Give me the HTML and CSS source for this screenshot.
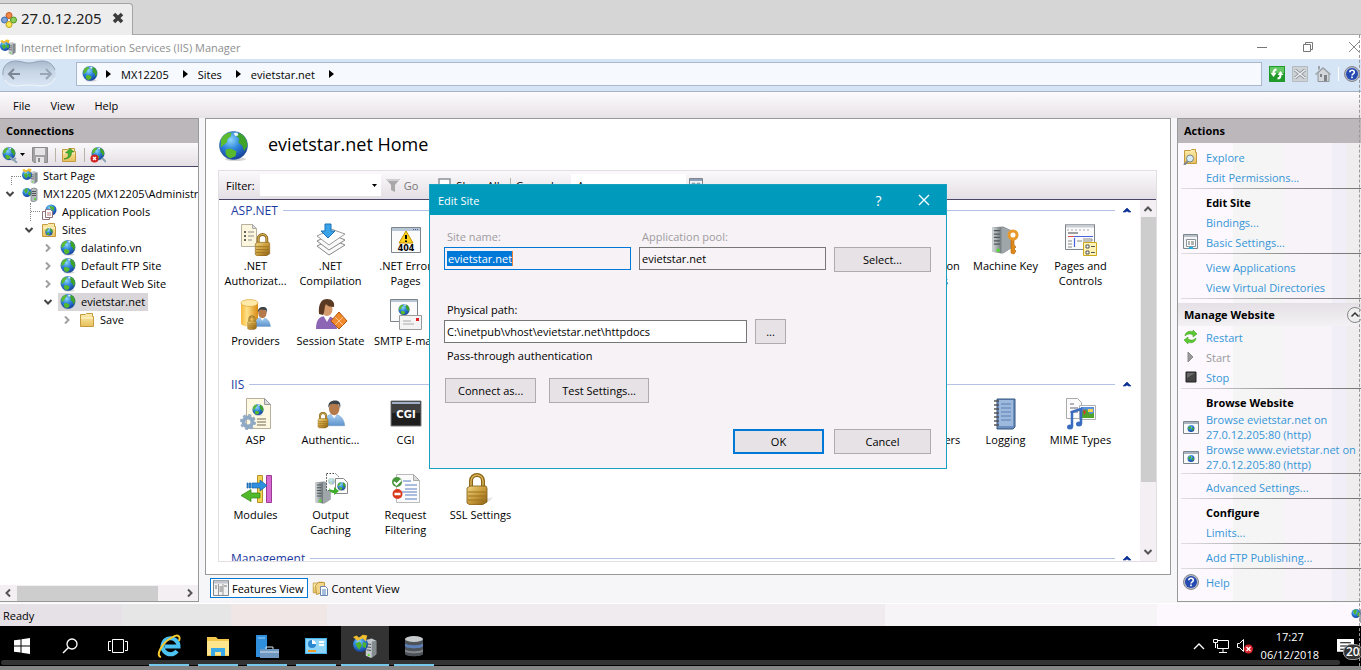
FILE: index.html
```html
<!DOCTYPE html>
<html lang="en">

<head>
    <meta charset="UTF-8">
    <meta name="viewport" content="width=device-width, initial-scale=1.0">
    <title>Internet Information Services (IIS) Manager</title>
    <link rel="stylesheet" href="styles.css">
</head>

<body>
    <!-- shared icon shapes -->
    <svg class="sprite" aria-hidden="true">
        <defs>
            <radialGradient id="sea" cx="0.4" cy="0.3" r="0.75">
                <stop offset="0" stop-color="#8fd6fb" />
                <stop offset="0.45" stop-color="#2f86dc" />
                <stop offset="1" stop-color="#123a96" />
            </radialGradient>
            <linearGradient id="gold" x1="0" x2="1" y1="0" y2="1">
                <stop offset="0" stop-color="#f0d784" />
                <stop offset="0.5" stop-color="#c99b3a" />
                <stop offset="1" stop-color="#8a5f12" />
            </linearGradient>
            <linearGradient id="steel" x1="0" x2="1">
                <stop offset="0" stop-color="#d8dcde" />
                <stop offset="1" stop-color="#6f777b" />
            </linearGradient>
            <linearGradient id="manila" x1="0" x2="0" y1="0" y2="1">
                <stop offset="0" stop-color="#fdeeb0" />
                <stop offset="1" stop-color="#e6c05c" />
            </linearGradient>
            <linearGradient id="drum" x1="0" x2="1">
                <stop offset="0" stop-color="#f6b73a" />
                <stop offset="0.35" stop-color="#ffe28a" />
                <stop offset="1" stop-color="#d98a12" />
            </linearGradient>
            <linearGradient id="sky" x1="0" x2="0" y1="0" y2="1">
                <stop offset="0" stop-color="#a9d0f3" />
                <stop offset="1" stop-color="#5d93cc" />
            </linearGradient>
            <linearGradient id="pill" x1="0" x2="0" y1="0" y2="1">
                <stop offset="0" stop-color="#a9b9cc" />
                <stop offset="0.4" stop-color="#c6d4e5" />
                <stop offset="1" stop-color="#d9e6f4" />
            </linearGradient>
        </defs>
        <symbol id="globe" viewBox="0 0 32 32">
            <ellipse cx="18" cy="29" rx="11" ry="2" fill="#d5d5d5" />
            <circle cx="16" cy="15" r="14.5" fill="url(#sea)" stroke="#2a5a9c" stroke-width="0.6" />
            <path d="M3 9C6 3 10 1 14 2l-1 4-3 2-1 4-4 3-2 2z" fill="#5cbb2e" />
            <path d="M22 2c5 2 9 8 8 14l-3 5-2-6-4-3 1-4-3-3z" fill="#3fa32a" />
            <path d="M8 19l5-1 6 3-1 5-5 2c-4-1-6-4-5-9z" fill="#58b92c" />
            <path d="M16 2l4-.5 1 3-3 1z" fill="#e8f6ff" />
        </symbol>
        <symbol id="tower" viewBox="0 0 32 32">
            <path d="M5 1l13-1 9 4v22l-9 6-13-2z" fill="#8a9296" />
            <path d="M5 1l11 0v31l-11-2z" fill="url(#steel)" />
            <path d="M16 1l11 3v22l-11 6z" fill="#9fa6a9" />
            <path d="M7 5h7M7 9h7M7 13h7M7 17h7M7 21h7" stroke="#4e565a" stroke-width="1.5" />
            <circle cx="12" cy="28" r="2" fill="#54dc2a" />
        </symbol>
        <symbol id="lock" viewBox="0 0 32 32">
            <path d="M10 16V8a6 6 0 0 1 12 0v8" fill="none" stroke="#8a6416" stroke-width="4" />
            <path d="M10 16V8a6 6 0 0 1 12 0v8" fill="none" stroke="#d9b45a" stroke-width="1.5" />
            <path d="M6 15l3-2h16l1 2v14l-5 3H9l-3-2z" fill="url(#gold)" stroke="#7e5812" stroke-width="0.8" />
            <path d="M7 19h18M7 23h18M7 27h18" stroke="#9a7222" stroke-width="1.2" />
        </symbol>
        <symbol id="folder" viewBox="0 0 16 16">
            <path d="M1.500 2.500h5l1-1h6v3h1v10h-13z" fill="url(#manila)" stroke="#c39a3c" />
            <path d="M2 6h12" stroke="#fff7d8" />
        </symbol>
        <symbol id="serverglobe" viewBox="0 0 16 16">
            <path d="M9 3l3-1 3 1v11l-3 2-3-1z" fill="#b5bcbf" stroke="#70787c" stroke-width="0.7" />
            <path d="M10 5.500h4M10 7.500h4M10 9.500h4" stroke="#555" />
            <circle cx="13" cy="13" r="1" fill="#4ad424" />
            <circle cx="5" cy="6.500" r="4.500" fill="url(#sea)" />
            <path d="M2 4l3-2 1 2-2 4zM7 5l2 1-1 4-2-2z" fill="#4fb32b" />
        </symbol>
        <symbol id="person" viewBox="0 0 32 32">
            <path d="M2 31c0-9 4-14 12-14s13 5 14 14z" fill="url(#sky)" stroke="#6b94bf" stroke-width="0.6" />
            <path d="M11 16l4 6 4-6z" fill="#fff" />
            <ellipse cx="15" cy="10" rx="6.500" ry="8" fill="#b47a4c" />
            <path d="M8 9c-1-6 3-9 8-9 5 0 8 3 6 10l-1-5-8-1-3 1z" fill="#3d4448" />
        </symbol>
        <symbol id="window" viewBox="0 0 32 32">
            <path d="M1.500 3.500h29v25h-29z" fill="#fbfbfb" stroke="#7d858c" />
            <path d="M2 4h28v3H2z" fill="#b9c6d6" />
            <path d="M23 5.500h6" stroke="#47628c" stroke-dasharray="1 1" />
        </symbol>
        <symbol id="sitewin" viewBox="0 0 16 16">
            <path d="M.500 2.500h15v12H.500z" fill="#fafafa" stroke="#7b858c" />
            <path d="M1 4h14" stroke="#a9b4c0" stroke-width="2" />
            <circle cx="8" cy="9.500" r="3.500" fill="url(#sea)" />
            <path d="M5 8l3-1v2l-2 2zM9 8l2 2-2 2z" fill="#45aa2a" />
        </symbol>
        <symbol id="help" viewBox="0 0 16 16">
            <circle cx="8" cy="8" r="7.500" fill="#b9bcc4" stroke="#70747e" stroke-width="0.8" />
            <circle cx="8" cy="8" r="6" fill="#2449b0" />
            <path d="M5.800 6.300C5.800 3.500 10.300 3.500 10.300 6.200 10.300 7.800 8 7.800 8 9.500M8 10.600v1.700" fill="none" stroke="#fff" stroke-width="1.600" />
        </symbol>
        <symbol id="iis" viewBox="0 0 32 32">
            <path d="M17 8l8-2 6 3v18l-7 5-7-3z" fill="#c3c9cc" />
            <path d="M25 10l6-1v18l-6 5z" fill="#838b8f" />
            <path d="M18 13l6 1M18 17l6 1M18 21l6 1" stroke="#555" stroke-width="1.500" />
            <circle cx="21" cy="28" r="1.500" fill="#5ae02a" />
            <circle cx="10" cy="14" r="10" fill="url(#sea)" />
            <path d="M3 13l6-3 3 5-4 6zM13 11l5 1-1 7-4-2z" fill="#4fb32b" />
            <path d="M0 4l5-2 3 3 5-4 6 1-2 8-4-4-7 3z" fill="#f2bd2e" />
        </symbol>
        <symbol id="up" viewBox="0 0 8 6">
            <path d="M0 5l4-4 4 4H5.500L4 4 2.500 5z" fill="#0a2f96" stroke="#0a2f96" stroke-width="0.600" />
        </symbol>
        <symbol id="chev" viewBox="0 0 10 10">
            <path d="M1.500 3l3.500 3.500L8.500 3" fill="none" stroke="currentColor" stroke-width="2" />
        </symbol>
        <symbol id="tri" viewBox="0 0 5 8">
            <path d="M0 0l5 4-5 4z" fill="#000" />
        </symbol>
    </svg>

    <div class="session-tabs">
        <div class="session-tab">
            <svg class="i16" viewBox="0 0 16 16">
                <circle cx="8" cy="3.500" r="3" fill="#f28a4a" stroke="#c4561a" />
                <circle cx="3.500" cy="8" r="3" fill="#7da3dc" stroke="#3d67a8" />
                <circle cx="12.500" cy="8" r="3" fill="#8fd05a" stroke="#4d8f20" />
                <circle cx="8" cy="12.500" r="3" fill="#f8e65a" stroke="#c0a012" />
            </svg>
            <span>27.0.12.205</span>
            <button class="tab-close" aria-label="Close">
                <svg viewBox="0 0 12 12"><path d="M2 2l8 8M10 2l-8 8" stroke="#3c3c3c" stroke-width="3.500" /></svg>
            </button>
        </div>
    </div>

    <header class="titlebar">
        <svg class="i16"><use href="#iis" /></svg>
        <span class="app-name">Internet Information Services (IIS) Manager</span>
        <button aria-label="Minimize"><svg viewBox="0 0 12 12"><path d="M1 6.500h10" stroke="#777" /></svg></button>
        <button aria-label="Restore"><svg viewBox="0 0 12 12"><path d="M1.500 3.500h7v7h-7zM3.500 3V1.500h7v7H9" fill="none" stroke="#777" /></svg></button>
        <button aria-label="Close"><svg viewBox="0 0 12 12"><path d="M1 1l10 10M11 1L1 11" stroke="#888" /></svg></button>
    </header>

    <div class="address">
        <svg class="nav-arrows" viewBox="0 0 56 28">
            <path d="M15 1c6 0 8 2 13 2s7-2 13-2c18 0 18 25 0 25-5 0-8-1-13-1s-8 1-13 1C-4 26-3 1 15 1z" fill="url(#pill)" />
            <path d="M2 15C1 5 8 1 15 1c6 0 8 2 13 2s7-2 13-2c6 0 11 3 13 9" fill="none" stroke="#94a3b5" />
            <path d="M4 20c3 5 8 6 12 6 4 0 7-1 12-1s8 1 13 1c6 0 11-3 13-8" fill="none" stroke="#f3f7fb" />
            <path d="M19 14H8m5-5l-5 5 5 5" fill="none" stroke="#7b8793" stroke-width="2" />
            <path d="M39 14h11m-5-5l5 5-5 5" fill="none" stroke="#98a6b6" stroke-width="2" />
        </svg>
        <nav class="crumbs">
            <svg class="i16"><use href="#globe" /></svg>
            <svg class="tri"><use href="#tri" /></svg><a href="#">MX12205</a>
            <svg class="tri"><use href="#tri" /></svg><a href="#">Sites</a>
            <svg class="tri"><use href="#tri" /></svg><a href="#">evietstar.net</a>
            <svg class="tri"><use href="#tri" /></svg>
        </nav>
        <div class="address-tools">
            <button aria-label="Refresh"><svg viewBox="0 0 16 16"><path d="M0 0h16v16H0z" fill="#1f9a2b" /><path d="M1 1h14v6H1z" fill="#63c763" /><path d="M7.500 3.500C5 3.500 4.500 5 4.500 7M8.500 12.500c2.500 0 3-1.500 3-3.500" fill="none" stroke="#fff" stroke-width="2" /><path d="M1.500 7h6l-3 4zM8.500 9h6l-3-4z" fill="#fff" /></svg></button>
            <button aria-label="Stop"><svg viewBox="0 0 16 16"><path d="M.500.500h15v15H.500z" fill="#cdd2d6" stroke="#b4babf" /><path d="M3 4l10 8M13 4L3 12" stroke="#8e9499" stroke-width="3" /><path d="M3 4l10 8M13 4L3 12" stroke="#eef0f2" stroke-width="1.500" /></svg></button>
            <button aria-label="Home"><svg viewBox="0 0 16 16"><path d="M3 7v8.500h11V7L8 2z" fill="#d3d7da" stroke="#8e9499" /><path d="M3 4V0h2v3M0 8l8-7 8 7-1 1-7-6-7 6z" fill="#9da3a8" /><path d="M5 8h2v3H5zM9 9h3v6H9z" fill="#7c8287" /></svg></button>
            <span class="tool-sep"></span>
            <button aria-label="Help"><svg><use href="#help" /></svg></button>
        </div>
    </div>

    <nav class="menubar">
        <button>File</button>
        <button>View</button>
        <button>Help</button>
    </nav>

    <main class="workspace">
        <section class="connections">
            <h2 class="pane-title">Connections</h2>
            <div class="tree-tools">
                <button aria-label="Connect"><svg viewBox="0 0 16 16"><use href="#globe" width="14" height="14" /><path d="M8 10l3 3 3-2M12 13l3 3" stroke="#8ba3b3" stroke-width="2" fill="none" /></svg></button>
                <svg class="drop" viewBox="0 0 5 3"><path d="M0 0h5L2.500 3z" /></svg>
                <button class="save" aria-label="Save"><svg viewBox="0 0 16 16"><path d="M.500.500h15v15H2l-1.500-1.500z" fill="#a2a2a2" stroke="#8b8b8b" /><path d="M3 1h10v7H3zM4 10h8v6H4z" fill="#e6e4e6" /><path d="M6 11h2v4H6z" fill="#8b8b8b" /></svg></button>
                <span class="tool-sep"></span>
                <button aria-label="Up"><svg viewBox="0 0 16 16"><use href="#folder" width="16" height="16" /><path d="M3 12c4-1 5-3 4-6H4.500L9 1.500 13 5h-2.500c0 5-3 7-7.500 7z" fill="#43b12d" stroke="#2b821b" stroke-width="0.600" /></svg></button>
                <span class="tool-sep"></span>
                <button aria-label="Disconnect"><svg viewBox="0 0 16 16"><use href="#globe" width="14" height="14" x="1" /><path d="M12 11l4 4" stroke="#8ba3b3" stroke-width="2" /><circle cx="4.500" cy="11.500" r="4" fill="#cf1f1f" /><path d="M3 10l3 3M6 10l-3 3" stroke="#fff" stroke-width="1.300" /></svg></button>
            </div>
            <ul class="tree">
                <li class="lvl0"><span class="elbow first"></span><svg class="i16"><use href="#iis" /></svg>Start Page</li>
                <li class="lvl0"><svg class="twist open"><use href="#chev" /></svg><svg class="i16"><use href="#serverglobe" /></svg>MX12205 (MX12205\Administrator)</li>
                <li class="lvl1"><span class="elbow"></span><svg class="i16" viewBox="0 0 16 16"><circle cx="10" cy="6" r="5.500" fill="url(#sea)" /><path d="M8 2l5 1v4l-3-2z" fill="#4fb32b" /><path d="M1.500 7.500h7v8h-7z" fill="#fff" stroke="#8c6f78" /><path d="M4.500 5.500h5l2 2v6h-7z" fill="#fff" stroke="#8c6f78" /><path d="M6 9h4M6 11h4" stroke="#b77" /></svg>Application Pools</li>
                <li class="lvl1"><svg class="twist open"><use href="#chev" /></svg><svg class="i16" viewBox="0 0 16 16"><use href="#folder" width="16" height="16" /><use href="#globe" x="4" y="6" width="8" height="8" /></svg>Sites</li>
                <li class="lvl2"><svg class="twist"><use href="#chev" /></svg><svg class="i16"><use href="#globe" /></svg>dalatinfo.vn</li>
                <li class="lvl2"><svg class="twist"><use href="#chev" /></svg><svg class="i16"><use href="#globe" /></svg>Default FTP Site</li>
                <li class="lvl2"><svg class="twist"><use href="#chev" /></svg><svg class="i16"><use href="#globe" /></svg>Default Web Site</li>
                <li class="lvl2"><svg class="twist open"><use href="#chev" /></svg><span class="pick"><svg class="i16"><use href="#globe" /></svg>evietstar.net</span></li>
                <li class="lvl3"><svg class="twist"><use href="#chev" /></svg><svg class="i16"><use href="#folder" /></svg>Save</li>
            </ul>
            <div class="hscroll">
                <svg class="left"><use href="#chev" /></svg>
                <div class="rail"><div class="thumb"></div></div>
                <svg class="right"><use href="#chev" /></svg>
            </div>
        </section>

        <section class="center">
            <div class="home">
                <div class="home-head">
                    <svg><use href="#globe" /></svg>
                    <h1>evietstar.net Home</h1>
                </div>
                <div class="features">
                    <div class="filterbar">
                        <label for="filter">Filter:</label>
                        <span class="combo"><input type="text" id="filter"><svg class="drop" viewBox="0 0 5 3"><path d="M0 0h5L2.500 3z" /></svg></span>
                        <button class="go"><svg viewBox="0 0 14 14"><path d="M0 1h14L9 7v7l-4-2V7z" fill="#a9a9a9" /><path d="M0 1h14l-2 2H2z" fill="#cfcfcf" /></svg>Go</button>
                        <button class="show-all"><svg viewBox="0 0 14 14"><path d="M1 1h11v9H1z" fill="#fff" stroke="#8c9299" stroke-width="1.500" /></svg>Show All</button>
                        <span class="tool-sep"></span>
                        <label for="group">Group by:</label>
                        <select id="group"><option>Area</option></select>
                        <button class="view-mode" aria-label="View"><svg viewBox="0 0 14 14"><path d="M.500.500h13v13H.500z" fill="#f4f4f4" stroke="#7d858c" /><path d="M1 2h12" stroke="#8fa0b8" stroke-width="2" /><path d="M3 5h3v3H3zM8 5h3v3H8z" fill="#8ec4e0" stroke="#777" stroke-width="0.500" /></svg></button>
                    </div>
                    <div class="feature-body">
                        <div class="feature-list">
                            <h3><span>ASP.NET</span><svg><use href="#up" /></svg></h3>
                            <div class="grid">
                                <div class="feature"><svg viewBox="0 0 32 32"><path d="M1.500.500h11l4 4v18h-15z" fill="#fbf6dd" stroke="#b8b09a" /><path d="M12.500.500v4h4z" fill="#ddd" stroke="#aaa" /><path d="M4 8h2M4 12h2M4 16h2" stroke="#333" stroke-width="1.500" /><path d="M8 8h6M8 12h6M8 16h4" stroke="#8b8b8b" /><use href="#lock" x="11" y="9" width="23" height="23" /></svg>.NET Authorizat...</div>
                                <div class="feature"><svg viewBox="0 0 32 32"><path d="M2 22l14-7 14 6-16 10z" fill="#fafafa" stroke="#888" /><path d="M2 17l14-7 14 6-16 10z" fill="#fafafa" stroke="#888" /><path d="M2 12l14-7 14 5-16 11z" fill="#fdfdfd" stroke="#999" /><path d="M10 0h6v7h4l-7 7-7-7h4z" fill="#39a4ea" stroke="#1a72b4" /></svg>.NET Compilation</div>
                                <div class="feature"><svg viewBox="0 0 32 32"><use href="#window" width="32" height="32" /><path d="M16 7l7 12H9z" fill="#ffd21f" stroke="#c89200" /><path d="M16 11v4M16 16.500v1.500" stroke="#000" stroke-width="2" /><text x="16" y="27" class="ico-404">404</text></svg>.NET Error Pages</div>
                                <div class="feature col-10">Connection Strings</div>
                                <div class="feature"><svg viewBox="0 0 32 32"><use href="#tower" x="-2" width="27" height="32" /><path d="M21 14v15l3 1 2-3-2-2 2-2-2-2v-7z" fill="#e08a1a" stroke="#a85c08" stroke-width="0.600" /><circle cx="23" cy="11" r="4" fill="#fff" stroke="#e9982a" stroke-width="3" /></svg>Machine Key</div>
                                <div class="feature"><svg viewBox="0 0 32 32"><path d="M.500.500h29v25H.500z" fill="#fafafa" stroke="#7d858c" /><path d="M1 2h28" stroke="#c9cdd3" stroke-width="3" /><path d="M2 6h24" stroke="#aaa" stroke-dasharray="2 2" /><path d="M3 9h10" stroke="#444" /><path d="M3 12.500h12" stroke="#e34a4a" /><path d="M9 12.500h19M9.500 14v9" stroke="#4a62e0" stroke-width="1.200" /><path d="M3 17h4M3 20h4M12 17h5M18 15h9v2h-9M3 23h4" stroke="#888" fill="none" /><path d="M18.500 18.500h13v13h-13z" fill="#fdf3b4" stroke="#d0a81e" /><path d="M21 21h3v3h-3zM21 27h3v3h-3z" fill="#fff" stroke="#555" /><path d="M26 22.500h4M26 28.500h4" stroke="#555" /></svg>Pages and Controls</div>
                                <div class="feature"><svg viewBox="0 0 32 32"><path d="M1 4v20c0 5 17 5 17 0V4z" fill="url(#drum)" /><ellipse cx="9.500" cy="4" rx="8.500" ry="3.500" fill="#ffe9a8" stroke="#d89a24" stroke-width="0.600" /><use href="#person" x="13" y="5" width="20" height="26" /><use href="#lock" x="5" y="15" width="14" height="17" /></svg>Providers</div>
                                <div class="feature"><svg viewBox="0 0 32 32"><path d="M1 30c0-9 3-13 10-13s10 4 11 13z" fill="#8d65b5" /><path d="M8 16l4 7 4-7z" fill="#fff" /><ellipse cx="12" cy="10" rx="5.500" ry="7" fill="#d49a6c" /><path d="M4 15C3 4 7 0 12 0s8 3 7 8c-4 0-7-1-8-3-2 3-1 8-3 11z" fill="#5a3a22" /><path d="M24 13l8 9-8 8-8-8z" fill="#f08a2c" stroke="#b4540a" /><path d="M20 18l8 8M28 18l-8 8" stroke="#fbc48c" /></svg>Session State</div>
                                <div class="feature"><svg viewBox="0 0 32 32"><path d="M.500.500h27v22H.500z" fill="#fbfbfb" stroke="#7d858c" /><path d="M1 2h26" stroke="#b9c6d6" stroke-width="2" /><use href="#globe" x="8" y="5" width="12" height="12" /><path d="M9.500 16.500h22v14h-22z" fill="#f4f4f4" stroke="#9a9a9a" /><path d="M13 22h8M13 25h11" stroke="#aaa" /><path d="M26 19h3v3h-3z" fill="#d22" /></svg>SMTP E-mail</div>
                            </div>
                            <h3><span>IIS</span><svg><use href="#up" /></svg></h3>
                            <div class="grid">
                                <div class="feature"><svg viewBox="0 0 32 32"><path d="M6.500.500h18l6 6v24h-24z" fill="#fdf8e2" stroke="#b8b09a" /><path d="M24.500.500v6h6z" fill="#ddd" stroke="#999" /><use href="#globe" x="12" y="6" width="12" height="12" /><path d="M17 21h9M17 24h9M17 27h9" stroke="#77684e" /><circle cx="8" cy="24" r="4.500" fill="none" stroke="#8fa9c4" stroke-width="4" /><circle cx="8" cy="24" r="7" fill="none" stroke="#8fa9c4" stroke-width="2" stroke-dasharray="3 2.500" /></svg>ASP</div>
                                <div class="feature"><svg viewBox="0 0 32 32"><use href="#person" x="7" width="26" height="31" /><use href="#lock" y="12" width="16" height="20" /></svg>Authentic...</div>
                                <div class="feature"><svg viewBox="0 0 32 32"><path d="M1 3h30v25H1z" fill="#1e1e1e" stroke="#7d7d7d" /><path d="M2 4h28v2H2z" fill="#9fb0c8" /><path d="M2 6h28v9H2z" fill="#3f3f3f" /><text x="16" y="20" class="ico-cgi">CGI</text></svg>CGI</div>
                                <div class="feature col-10">ISAPI Filters</div>
                                <div class="feature"><svg viewBox="0 0 32 32"><path d="M7 1h18v28l-2 2H7z" fill="#6d8fc0" stroke="#35557f" /><path d="M9 2h14v26H9z" fill="#9db9dd" /><path d="M11 6h10M11 10h10M11 14h10M11 18h10M11 22h10" stroke="#5b7fb4" /><path d="M4 3h5M4 7h5M4 11h5M4 15h5M4 19h5M4 23h5M4 27h5" stroke="#555" stroke-width="1.500" /></svg>Logging</div>
                                <div class="feature"><svg viewBox="0 0 32 32"><path d="M1.500.500h11l4 4v16h-15z" fill="#fbfbfb" stroke="#aaa" /><path d="M5 6h4M5 10h8M5 14h8" stroke="#667" /><path d="M14.500 7.500h16v14h-16z" fill="#fff" stroke="#b0b0b0" /><path d="M16 9h13v11H16z" fill="#5b8fe0" /><path d="M16 14l5-3 4 5 4-1v5H16z" fill="#4ea42a" /><path d="M23 11h5v3h-5z" fill="#f3d24a" /><path d="M18 11l3 3-2 3z" fill="#d93030" /><path d="M7 29V14l9-3v15" fill="none" stroke="#3a6cc0" stroke-width="2.500" /><ellipse cx="5" cy="29" rx="3" ry="2.500" fill="#3a6cc0" /><ellipse cx="14" cy="26" rx="3" ry="2.500" fill="#3a6cc0" /></svg>MIME Types</div>
                                <div class="feature"><svg viewBox="0 0 32 32"><path d="M17.500 2.500h5v27h-5z" fill="#f3d354" stroke="#b8922a" /><path d="M26.500 2.500h5v27h-5z" fill="#d76ad0" stroke="#9a3a94" /><path d="M7 10h1v5H7zM9 10h2v5H9zM12 10h8V7l7 5.500-7 5.500v-3h-8z" fill="#2d8fe0" stroke="#1762a8" stroke-width="0.700" /><path d="M20 20v5h-9v3.500l-10-6 10-6V20z" fill="#52b92a" stroke="#2f8412" stroke-width="0.700" /></svg>Modules</div>
                                <div class="feature"><svg viewBox="0 0 32 32"><use href="#tower" x="-3" y="7" width="22" height="25" /><path d="M11.500.500h9l3 3v14h-12z" fill="#fff" stroke="#444" stroke-dasharray="1.500 1.500" /><path d="M20.500 5.500h8l4 4v11h-12z" fill="#fff" stroke="#888" /><use href="#globe" x="22" y="9" width="9" height="9" /><use href="#globe" x="13" y="5" width="7" height="7" opacity="0.4" /><path d="M14 15c1 2 3 2 5 2v-3l5 4-5 4v-2c-3 0-5-2-5-5z" fill="#3fae2a" /></svg>Output Caching</div>
                                <div class="feature"><svg viewBox="0 0 32 32"><path d="M6.500 1.500h17l6 6v22h-23z" fill="#fbfbfb" stroke="#bbb" /><path d="M23.500 1.500v6h6z" fill="#ddd" stroke="#aaa" /><path d="M13 8h8M15 12h12M15 16h12M12 19h15M15 22h12M15 26h12" stroke="#5a7fc0" /><circle cx="7" cy="9" r="5" fill="#46963a" /><path d="M4 9l2.500 2.500L11 7" stroke="#fff" stroke-width="2" fill="none" /><circle cx="7.500" cy="21" r="5" fill="#d93a1e" /><path d="M4.500 21h6" stroke="#fff" stroke-width="2.500" /></svg>Request Filtering</div>
                                <div class="feature"><svg viewBox="0 0 32 32"><path d="M14 28l14-4-3 4-11 3z" fill="#e5e5e5" /><use href="#lock" x="-4" width="32" height="32" /></svg>SSL Settings</div>
                            </div>
                            <h3><span>Management</span><svg><use href="#up" /></svg></h3>
                        </div>
                        <div class="vscroll">
                            <svg class="upward"><use href="#chev" /></svg>
                            <div class="rail"><div class="thumb"></div></div>
                            <svg><use href="#chev" /></svg>
                        </div>
                    </div>
                </div>
            </div>
            <div class="view-tabs">
                <button class="active"><svg viewBox="0 0 16 16"><path d="M.500.500h15v15H.500z" fill="#f2f2f2" stroke="#7d858c" /><path d="M1 2h14" stroke="#c2c6cc" stroke-width="3" /><path d="M5.500 4v11M10 4v11" stroke="#999" /><path d="M2 6h2M2 8h2M6.500 7h3M6.500 9h3M6.500 11h3M11 6h3" stroke="#777" /></svg>Features View</button>
                <button><svg viewBox="0 0 16 16"><use href="#folder" width="13" height="13" y="1" /><path d="M3.500 5.500l3-3h6v9l-8 3z" fill="#f0d58a" stroke="#c39a3c" /><path d="M8.500 6.500h5l2 2v7h-7z" fill="#fff" stroke="#6d87ac" /><path d="M10 10h4M10 12h4M10 14h4" stroke="#4b78b8" /></svg>Content View</button>
            </div>
        </section>

        <aside class="actions">
            <h2 class="pane-title">Actions</h2>
            <ul>
                <li><svg class="i16" viewBox="0 0 16 16"><path d="M1.500 1.500h6l1-1h4v3h1v11h-12z" fill="url(#manila)" stroke="#c39a3c" /><path d="M5 12l-4 4" stroke="#7d858c" stroke-width="2" /><circle cx="7" cy="9.500" r="3.500" fill="#d6ecf8" stroke="#7d858c" /></svg><a href="#">Explore</a></li>
                <li><a href="#">Edit Permissions...</a></li>
                <li class="sep"></li>
                <li class="group">Edit Site</li>
                <li><a href="#">Bindings...</a></li>
                <li><svg class="i16" viewBox="0 0 16 16"><path d="M.500.500h14v14H.500z" fill="#f2f4f6" stroke="#7d858c" /><path d="M1 2h13" stroke="#b9c0c8" stroke-width="2" /><path d="M3.500 5.500h9v7h-9z" fill="#fff" stroke="#8a9299" /><path d="M5 8h2M8 8h3M5 10h2M8 10h3" stroke="#666" /><path d="M6 14h4" stroke="#1ab3e8" stroke-width="2" /></svg><a href="#">Basic Settings...</a></li>
                <li class="sep"></li>
                <li><a href="#">View Applications</a></li>
                <li><a href="#">View Virtual Directories</a></li>
                <li class="sep"></li>
            </ul>
            <h3 class="manage">Manage Website <button aria-label="Collapse"><svg viewBox="0 0 16 16"><circle cx="8" cy="8" r="7.500" fill="#eee" stroke="#888" /><path d="M4.500 9.500L8 6l3.500 3.500" fill="none" stroke="#333" stroke-width="1.500" /></svg></button></h3>
            <ul>
                <li><svg class="i16" viewBox="0 0 16 16"><path d="M2 7c0-4 5-6 8-4V1l4 4-4 3V6C7 4 4 5 2 7z" fill="#5cc832" stroke="#3b9a1a" stroke-width="0.500" /><path d="M13 9c0 4-5 6-8 4v2l-4-4 4-3v2c3 2 6 1 8-1z" fill="#5cc832" stroke="#3b9a1a" stroke-width="0.500" /></svg><a href="#">Restart</a></li>
                <li class="off"><svg class="i16" viewBox="0 0 16 16"><path d="M5 3l5 5-5 5z" fill="#9a9a9a" stroke="#8a8a8a" /></svg><span>Start</span></li>
                <li><svg class="i16" viewBox="0 0 16 16"><path d="M3 3h10v10H3z" fill="#444" stroke="#222" /><path d="M4 4h8L4 9z" fill="#6a6a6a" /></svg><a href="#">Stop</a></li>
                <li class="sep"></li>
                <li class="group">Browse Website</li>
                <li class="double"><svg class="i16"><use href="#sitewin" /></svg><a href="#">Browse evietstar.net on<br>27.0.12.205:80 (http)</a></li>
                <li class="double"><svg class="i16"><use href="#sitewin" /></svg><a href="#">Browse www.evietstar.net on<br>27.0.12.205:80 (http)</a></li>
                <li class="sep"></li>
                <li><a href="#">Advanced Settings...</a></li>
                <li class="sep"></li>
                <li class="group">Configure</li>
                <li><a href="#">Limits...</a></li>
                <li class="sep"></li>
                <li><a href="#">Add FTP Publishing...</a></li>
                <li class="sep"></li>
                <li><svg class="i16"><use href="#help" /></svg><a href="#">Help</a></li>
            </ul>
        </aside>
    </main>

    <footer class="status">
        <span>Ready</span>
        <svg class="i16"><use href="#serverglobe" /></svg>
    </footer>

    <div class="taskbar">
        <div class="system">
            <button aria-label="Start"><svg viewBox="0 0 16 16"><path d="M0 2.300L6.500 1.400v6.100H0zM7.500 1.200L16 0v7.500H7.500zM0 8.500h6.500v6.100L0 13.700zM7.500 8.500H16V16l-8.500-1.200z" fill="#fff" /></svg></button>
            <button aria-label="Search"><svg viewBox="0 0 16 16"><circle cx="10" cy="6" r="5" fill="none" stroke="#fff" stroke-width="1.300" /><path d="M6.500 9.500L1 15" stroke="#fff" stroke-width="1.500" /></svg></button>
            <button aria-label="Task view"><svg class="wide" viewBox="0 0 20 16"><path d="M4.500 1.500h11v13h-11zM3 3.500H.500v9H3M17 3.500h2.500v9H17" fill="none" stroke="#fff" /></svg></button>
        </div>
        <div class="apps">
            <button aria-label="Internet Explorer"><svg viewBox="0 0 24 24"><path d="M20 17a8 8 0 1 1 1.500-4.500H8" fill="none" stroke="#4cc3f2" stroke-width="4" /><path d="M4 23C-2 22 5 9 14 4c6-4 10-3 8 3" fill="none" stroke="#f7c92c" stroke-width="2" /></svg></button>
            <button aria-label="File Explorer"><svg viewBox="0 0 24 24"><path d="M1 3h9l2 2h11v17H1z" fill="#f3c74b" /><path d="M1 7h22v14H1z" fill="#fde58e" /><path d="M5 22v-8h14v8h-4v-4H9v4z" fill="#39a9e8" /></svg></button>
            <button aria-label="Server Manager"><svg viewBox="0 0 24 24"><path d="M1 1h11v22H1z" fill="#2f8fdc" /><path d="M3 4h7" stroke="#9fd2f7" /><path d="M5 15h19v9H5z" fill="#6f97bf" /><path d="M11 15v-2h7v2M5 18h19" fill="none" stroke="#d5e4f2" /></svg></button>
            <button aria-label="Control Panel"><svg viewBox="0 0 24 24"><path d="M1 4h22v16H1z" fill="#45b4ee" /><path d="M2 5h20v14H2z" fill="#8ed4f8" /><circle cx="8" cy="10" r="4" fill="#2a86cf" /><path d="M8 10V6a4 4 0 0 1 4 4z" fill="#fff" /><path d="M15 8h5M15 11h5" stroke="#fff" stroke-width="2" /><path d="M4 17h8" stroke="#e89d2c" stroke-width="2" /></svg></button>
            <button class="current" aria-label="IIS Manager"><svg><use href="#iis" /></svg></button>
            <button aria-label="Database"><svg viewBox="0 0 24 24"><path d="M3 5v15c0 3 18 3 18 0V5z" fill="#4d5358" /><path d="M3 9c0 3 18 3 18 0v3c0 3-18 3-18 0z" fill="#5d7fb8" /><path d="M3 15c0 3 18 3 18 0v2c0 3-18 3-18 0z" fill="#85898c" /><ellipse cx="12" cy="5" rx="9" ry="3" fill="#c8cbce" /></svg></button>
        </div>
        <div class="tray">
            <svg class="t12" viewBox="0 0 12 12"><path d="M1 9l5-5 5 5" fill="none" stroke="#fff" stroke-width="1.300" /></svg>
            <svg class="t16" viewBox="0 0 16 16"><path d="M5 2.500h10.500v8H4.500V6M10 11v3M6 14.500h8M.500 1.500h4v3h-4zM2.500 5v5" fill="none" stroke="#fff" /></svg>
            <svg class="t16" viewBox="0 0 16 16"><path d="M.500 5.500h2l4-4v12l-4-4h-2z" fill="none" stroke="#fff" /><circle cx="11.500" cy="11" r="4.500" fill="#d8232a" /><path d="M9.500 9l4 4M13.500 9l-4 4" stroke="#fff" stroke-width="1.300" /></svg>
            <div class="clock">17:27<br>06/12/2018</div>
            <button class="notify" aria-label="Notifications"><svg viewBox="0 0 16 16"><path d="M0 1h16v12H9l-3 3v-3H0z" fill="#fff" /><path d="M3 4.500h10M3 7.500h10M3 10.500h7" stroke="#000" /></svg><span class="count">20</span></button>
        </div>
        <div class="viewport-bar"></div>
    </div>
    <div class="viewport-edge"></div>

    <form class="dialog" role="dialog" aria-labelledby="dialog-title">
        <div class="dialog-title">
            <span id="dialog-title">Edit Site</span>
            <button type="button" aria-label="Help">?</button>
            <button type="button" aria-label="Close"><svg viewBox="0 0 12 12"><path d="M1 1l10 10M11 1L1 11" stroke="#fff" stroke-width="1.300" /></svg></button>
        </div>
        <div class="dialog-body">
            <div class="names">
                <div class="field">
                    <label for="site-name">Site name:</label>
                    <div class="selected-box"><input type="text" id="site-name" value="evietstar.net" readonly></div>
                </div>
                <div class="field">
                    <label for="pool">Application pool:</label>
                    <input type="text" id="pool" value="evietstar.net" readonly>
                </div>
                <button type="button" class="btn">Select...</button>
            </div>
            <label class="path-label" for="path">Physical path:</label>
            <div class="path-row">
                <input type="text" id="path" value="C:\inetpub\vhost\evietstar.net\httpdocs">
                <button type="button" class="btn">...</button>
            </div>
            <p>Pass-through authentication</p>
            <div class="auth-row">
                <button type="button" class="btn">Connect as...</button>
                <button type="button" class="btn">Test Settings...</button>
            </div>
            <div class="dialog-buttons">
                <button type="submit" class="btn primary">OK</button>
                <button type="button" class="btn">Cancel</button>
            </div>
        </div>
    </form>
</body>

</html>
```
FILE: styles.css
```css
* {
    box-sizing: border-box;
}

body {
    margin: 0;
    height: 100vh;
    display: flex;
    flex-direction: column;
    position: relative;
    overflow: hidden;
    background-color: #f6f5f7;
    color: #000;
    font: 11px/15px "Open Sans", "Noto Sans", sans-serif;
}

button,
input,
select {
    font: inherit;
    color: inherit;
}

button {
    padding: 0;
    border: none;
    background: none;
}

svg {
    display: block;
    flex: none;
}

ul {
    list-style: none;
    margin: 0;
    padding: 0;
}

h1,
h2,
h3,
p {
    margin: 0;
}

a {
    text-decoration: none;
}

.sprite {
    position: absolute;
    width: 0;
    height: 0;
}

.i16 {
    width: 16px;
    height: 16px;
}

/* remote session tab */
.session-tabs {
    flex: none;
    height: 35px;
    padding-top: 3px;
    background-color: #d6d6d6;
    border-bottom: 1px solid #a9a9a9;
}

.session-tab {
    display: flex;
    align-items: center;
    gap: 4px;
    width: 133px;
    height: 32px;
    padding-left: 1px;
    background-color: #ededed;
    border: 1px solid #a3a3a3;
    border-left: none;
    border-bottom: none;
    border-radius: 0 4px 0 0;
    font: 15px/20px "Noto Sans", sans-serif;
    color: #222;
}

.session-tab span {
    padding-bottom: 3px;
}

.tab-close {
    margin: 0 0 3px 6px;
}

.tab-close svg {
    width: 12px;
    height: 12px;
}

/* window title */
.titlebar {
    flex: none;
    display: flex;
    align-items: center;
    height: 24px;
    background-color: #fff;
    color: #8f8f8f;
}

.app-name {
    flex: 1;
    margin-left: 5px;
}

.titlebar button {
    margin-left: 34px;
}

.titlebar button:last-child {
    margin-right: 1px;
}

.titlebar button svg {
    width: 12px;
    height: 12px;
}

.address {
    flex: none;
    display: flex;
    align-items: center;
    height: 33px;
    padding-bottom: 2px;
    background-color: #d5e5f5;
    border-bottom: 1px solid #a3b3c3;
}

.nav-arrows {
    width: 56px;
    height: 28px;
    margin: 0 19px 0 1px;
}

.crumbs {
    flex: 1;
    display: flex;
    align-items: center;
    height: 24px;
    padding-left: 5px;
    background-color: #f6f9fe;
    border: 1px solid #a9b9cb;
}

.crumbs a {
    color: #000;
    margin: 0 10px 0 0;
}

.tri {
    width: 5px;
    height: 8px;
    margin: 0 10px 0 4px;
}

.crumbs .i16 + .tri {
    margin-left: 8px;
}

.address-tools {
    display: flex;
    align-items: center;
    gap: 7px;
    margin-left: 7px;
    margin-right: 1px;
}

.address-tools svg {
    width: 16px;
    height: 16px;
}

.tool-sep {
    width: 1px;
    height: 14px;
    background-color: #b5b5a5;
}

.address-tools .tool-sep {
    background-color: #fff;
    margin-right: -2px;
}

.menubar {
    flex: none;
    display: flex;
    gap: 20px;
    height: 26px;
    padding-left: 13px;
    background: linear-gradient(#fdfbfd, #e7e2e6);
}

/* main area */
.workspace {
    flex: 1;
    min-height: 0;
    display: flex;
    gap: 6px;
    border-bottom: 1px solid #fff;
}

.pane-title {
    flex: none;
    height: 24px;
    padding-left: 6px;
    background-color: #bbb7bb;
    font-size: 11px;
    line-height: 24px;
}

.connections {
    width: 199px;
    margin-bottom: 1px;
    display: flex;
    flex-direction: column;
    background-color: #fff;
    border: 1px solid #999;
    border-left: none;
}

.tree-tools {
    flex: none;
    display: flex;
    align-items: center;
    height: 24px;
    padding-left: 2px;
    background: linear-gradient(#fbf9fb, #e4dfe4);
    border-bottom: 1px solid #4a4668;
}

.tree-tools button svg {
    width: 16px;
    height: 16px;
}

.drop {
    width: 5px;
    height: 3px;
    margin-left: 2px;
}

.tree-tools .save {
    margin-left: 7px;
}

.tree-tools .tool-sep {
    margin: 0 5px 0 7px;
}

.tree {
    flex: 1;
    overflow: hidden;
}

.tree li {
    display: flex;
    align-items: center;
    height: 18px;
    line-height: 18px;
    white-space: nowrap;
}

.tree .i16 {
    margin-right: 5px;
}

.twist {
    width: 10px;
    height: 10px;
    margin: 0 7px 0 5px;
    color: #a0a0a0;
    transform: rotate(-90deg);
}

.twist.open {
    color: #444;
    transform: none;
}

/* dotted guide lines beside leaf nodes */
.elbow {
    flex: none;
    width: 11px;
    height: 18px;
    margin-left: 11px;
    border-left: 1px dotted #888;
    background: linear-gradient(90deg, #888 50%, transparent 50%) 0 8px / 2px 1px repeat-x;
}

.elbow.first {
    height: 9px;
    align-self: flex-end;
    background-position: 0 0;
}

.lvl1 {
    padding-left: 19px;
}

.lvl2 {
    padding-left: 38px;
}

.lvl3 {
    padding-left: 57px;
}

.pick {
    display: flex;
    align-items: center;
    height: 18px;
    margin-left: -2px;
    padding: 0 3px 0 2px;
    background-color: #d9d6d9;
}

.hscroll {
    flex: none;
    display: flex;
    align-items: center;
    gap: 4px;
    height: 16px;
    padding: 0 3px;
    background-color: #f3eff3;
    color: #555;
}

.hscroll svg,
.vscroll svg {
    width: 10px;
    height: 10px;
}

.left {
    transform: rotate(90deg);
}

.right {
    transform: rotate(-90deg);
}

.upward {
    transform: rotate(180deg);
}

.hscroll .rail {
    flex: 1;
}

.hscroll .thumb {
    width: 86%;
    height: 15px;
    background-color: #cdcdcd;
}

.center {
    flex: 1;
    min-width: 0;
    display: flex;
    flex-direction: column;
}

.home {
    flex: 1;
    min-height: 0;
    display: flex;
    flex-direction: column;
    padding: 0 13px 12px 12px;
    background-color: #fff;
    border: 1px solid #999;
}

.home-head {
    flex: none;
    display: flex;
    align-items: flex-start;
    height: 51px;
    padding-top: 12px;
}

.home-head svg {
    width: 31px;
    height: 31px;
}

.home-head h1 {
    margin-left: 19px;
    font-size: 18px;
    font-weight: 400;
    line-height: 26px;
}

.features {
    flex: 1;
    min-height: 0;
    display: flex;
    flex-direction: column;
    border: 1px solid #e3dee3;
}

.filterbar {
    flex: none;
    display: flex;
    align-items: center;
    height: 29px;
    padding-left: 7px;
    background: linear-gradient(#fbf9fb, #e4dfe4);
    border-bottom: 1px solid #4a4668;
}

.combo {
    display: flex;
    align-items: center;
    width: 121px;
    height: 22px;
    margin-left: 5px;
    padding-right: 4px;
    background-color: #fff;
}

.combo input {
    flex: 1;
    min-width: 0;
    border: none;
    background: none;
}

.go,
.show-all {
    display: flex;
    align-items: center;
    gap: 4px;
    margin-left: 5px;
    color: #777;
}

.go svg,
.show-all svg,
.view-mode svg {
    width: 14px;
    height: 14px;
}

.show-all {
    margin: 0 10px 0 20px;
    color: #000;
}

.filterbar .tool-sep {
    margin-right: 5px;
}

.filterbar select {
    appearance: none;
    width: 115px;
    height: 22px;
    margin-left: 5px;
    padding-left: 6px;
    border: none;
    background-color: #fff;
}

.view-mode {
    margin-left: 3px;
}

.feature-body {
    flex: 1;
    min-height: 0;
    display: flex;
}

.feature-list {
    flex: 1;
    overflow: hidden;
}

.feature-list h3 {
    display: flex;
    align-items: center;
    height: 20px;
    margin: 0 9px 4px 12px;
    font-size: 12px;
    font-weight: 400;
    color: #1c3aa0;
}

.feature-list h3::after {
    content: "";
    order: 1;
    flex: 1;
    height: 1px;
    margin: 0 8px 0 5px;
    background-color: #b4c0e4;
}

.feature-list h3 svg {
    order: 2;
    width: 8px;
    height: 6px;
}

.grid {
    display: grid;
    grid-template-columns: repeat(12, 75px);
    grid-auto-rows: 75px;
}

.feature {
    display: flex;
    flex-direction: column;
    align-items: center;
    gap: 2px;
    padding-right: 2px;
    text-align: center;
}

.feature svg {
    width: 32px;
    height: 32px;
    overflow: visible;
}

/* text-only features keep the label row aligned with the rest */
.col-10 {
    grid-column-start: 10;
    padding-top: 34px;
}

.ico-404 {
    font: bold 8px "DejaVu Sans", sans-serif;
    text-anchor: middle;
}

.ico-cgi {
    font: bold 10px "DejaVu Sans", sans-serif;
    text-anchor: middle;
    fill: #fff;
}

.vscroll {
    display: flex;
    flex-direction: column;
    align-items: center;
    gap: 3px;
    width: 16px;
    padding: 4px 0;
    background-color: #f3eff3;
    color: #555;
}

.vscroll .rail {
    flex: 1;
    width: 15px;
}

.vscroll .thumb {
    height: 81%;
    background-color: #cdcdcd;
}

.view-tabs {
    flex: none;
    display: flex;
    gap: 1px;
    height: 28px;
    padding: 3px 5px;
}

.view-tabs button {
    display: flex;
    align-items: center;
    gap: 3px;
    height: 20px;
    padding: 0 2px;
    border: 1px solid transparent;
}

.view-tabs .active {
    padding-right: 4px;
    background-color: #fff;
    border-color: #0078d7;
}

.view-tabs svg {
    width: 16px;
    height: 16px;
}

/* actions pane */
.actions {
    width: 184px;
    margin-bottom: 1px;
    overflow: hidden;
    background: linear-gradient(90deg, #fcf8fe 30%, #f5f5f6 30% 58%, #f7f3f8 58% 84%, #f2eef8 84% 92%, #f0edef 92%);
    border: 1px solid #999;
    border-right: none;
}

.actions ul {
    padding-top: 4px;
}

.actions .manage + ul {
    padding-top: 0;
}

.actions li {
    display: flex;
    align-items: center;
    height: 20px;
    padding-left: 28px;
    white-space: nowrap;
}

.actions li .i16 {
    margin: 0 7px 0 -23px;
}

.actions a {
    color: #3596d6;
}

.actions .double {
    height: 30px;
}

.actions .sep {
    height: 5px;
    padding: 0;
}

.actions .sep::after {
    content: "";
    flex: 1;
    height: 1px;
    margin: 0 0 2px 3px;
    background: linear-gradient(90deg, #e2dfe3, #8d8d8d 60%, #777);
}

.actions .group {
    font-weight: 700;
}

.actions .off {
    color: #999;
}

.manage {
    display: flex;
    align-items: center;
    justify-content: space-between;
    height: 23px;
    margin: 1px 0;
    padding-left: 6px;
    background: linear-gradient(#e4e0e5, #f4f1f5);
    font-size: 11px;
}

.manage svg {
    width: 16px;
    height: 16px;
    margin-right: -2px;
}

.status {
    flex: none;
    display: flex;
    align-items: center;
    justify-content: space-between;
    height: 22px;
    padding-left: 3px;
    background: linear-gradient(90deg, #e6e1e6 9%, #e6e6e6 9% 17%, #f0e6e6 17% 24%, #efebef 24% 65%, #f6f4f6 65% 85%, #fcf8fe 85%);
}

.status .i16 {
    margin-right: -6px;
}

/* taskbar */
.taskbar {
    flex: none;
    position: relative;
    display: flex;
    height: 44px;
    background-color: #000;
    border-bottom: 4px solid #858585;
    color: #fff;
}

.system,
.apps {
    display: flex;
}

.system button {
    width: 48px;
    display: flex;
    align-items: center;
    justify-content: center;
    padding-right: 4px;
}

.system svg {
    width: 16px;
    height: 16px;
}

.system .wide {
    width: 20px;
}

.apps {
    gap: 1px;
    margin-left: 1px;
}

.apps button {
    z-index: 1;
    position: relative;
    width: 48px;
    display: flex;
    align-items: center;
    justify-content: center;
}

.apps button::after {
    content: "";
    position: absolute;
    left: 4px;
    right: 4px;
    bottom: 0;
    height: 2px;
    background-color: #76c8ea;
}

.apps svg {
    width: 24px;
    height: 24px;
}

.apps .current {
    background-color: #333;
}

.apps .current::after {
    left: 0;
    right: 0;
}

.tray {
    flex: 1;
    display: flex;
    align-items: center;
    justify-content: flex-end;
    gap: 8px;
}

.t12 {
    width: 12px;
    height: 12px;
}

.t16 {
    width: 16px;
    height: 16px;
}

.clock {
    text-align: center;
    line-height: 18px;
}

.notify {
    position: relative;
    margin: 0 7px 0 10px;
}

.notify svg {
    width: 17px;
    height: 17px;
}

.count {
    position: absolute;
    left: 6px;
    top: 6px;
    padding: 0 2px;
    border: 1px solid #999;
    border-radius: 8px;
    background-color: #333;
    font-size: 12px;
    font-weight: 600;
    line-height: 14px;
}

.viewport-bar {
    position: absolute;
    left: 1px;
    right: 21px;
    bottom: 1px;
    height: 5px;
    border-radius: 3px;
    background-color: #333;
}

.viewport-edge {
    position: absolute;
    top: 35px;
    bottom: 4px;
    right: 1px;
    border-right: 1px dashed #999;
}

/* edit site dialog */
.dialog {
    position: absolute;
    left: 429px;
    top: 184px;
    width: 518px;
    background-color: #f6f2f6;
    border: 1px solid #18a0c0;
}

.dialog-title {
    display: flex;
    align-items: center;
    height: 30px;
    padding-left: 8px;
    background-color: #009abd;
    color: #fff;
}

.dialog-title span {
    flex: 1;
}

.dialog-title button {
    width: 45px;
    display: flex;
    justify-content: center;
    font-size: 14px;
}

.dialog-title svg {
    width: 12px;
    height: 12px;
}

.dialog-body {
    padding: 14px 15px;
}

.names {
    display: flex;
    gap: 8px;
    align-items: flex-end;
}

.field label {
    display: block;
    margin: 0 0 3px 3px;
    color: #a09ca0;
}

.dialog input {
    display: block;
    height: 23px;
    padding: 0 2px;
    background-color: #f6f2f6;
    border: 1px solid #777;
    outline: none;
}

.dialog .names,
.path-row {
    margin-left: -1px;
}

.field input {
    width: 187px;
}

.selected-box {
    width: 187px;
    height: 23px;
    padding: 3px 2px;
    border: 1px solid #0078d7;
}

.dialog .selected-box input {
    width: 66px;
    height: 15px;
    padding: 0 0 0 1px;
    background-color: #0078d7;
    color: #fff;
    border: none;
    border-right: 1px solid #e8813a;
}

.btn {
    height: 25px;
    background-color: #e6e2e6;
    border: 1px solid #adabad;
}

.names .btn {
    width: 97px;
    margin-bottom: -2px;
}

.path-label {
    display: block;
    margin: 32px 0 0 2px;
}

.path-row {
    display: flex;
    gap: 8px;
    align-items: center;
    margin-top: 2px;
}

.path-row input {
    width: 303px;
}

.dialog .path-row input {
    background-color: #fff;
}

.path-row .btn {
    width: 31px;
}

.dialog p {
    margin: 4px 0 15px 2px;
}

.auth-row {
    display: flex;
    gap: 13px;
}

.auth-row .btn {
    padding: 0 12px;
    min-width: 91px;
}

.dialog-buttons {
    display: flex;
    justify-content: flex-end;
    gap: 10px;
    margin-top: 26px;
}

.dialog-buttons .btn {
    width: 97px;
}

.dialog-buttons .primary {
    width: 91px;
    border: 2px solid #0078d7;
}
```
